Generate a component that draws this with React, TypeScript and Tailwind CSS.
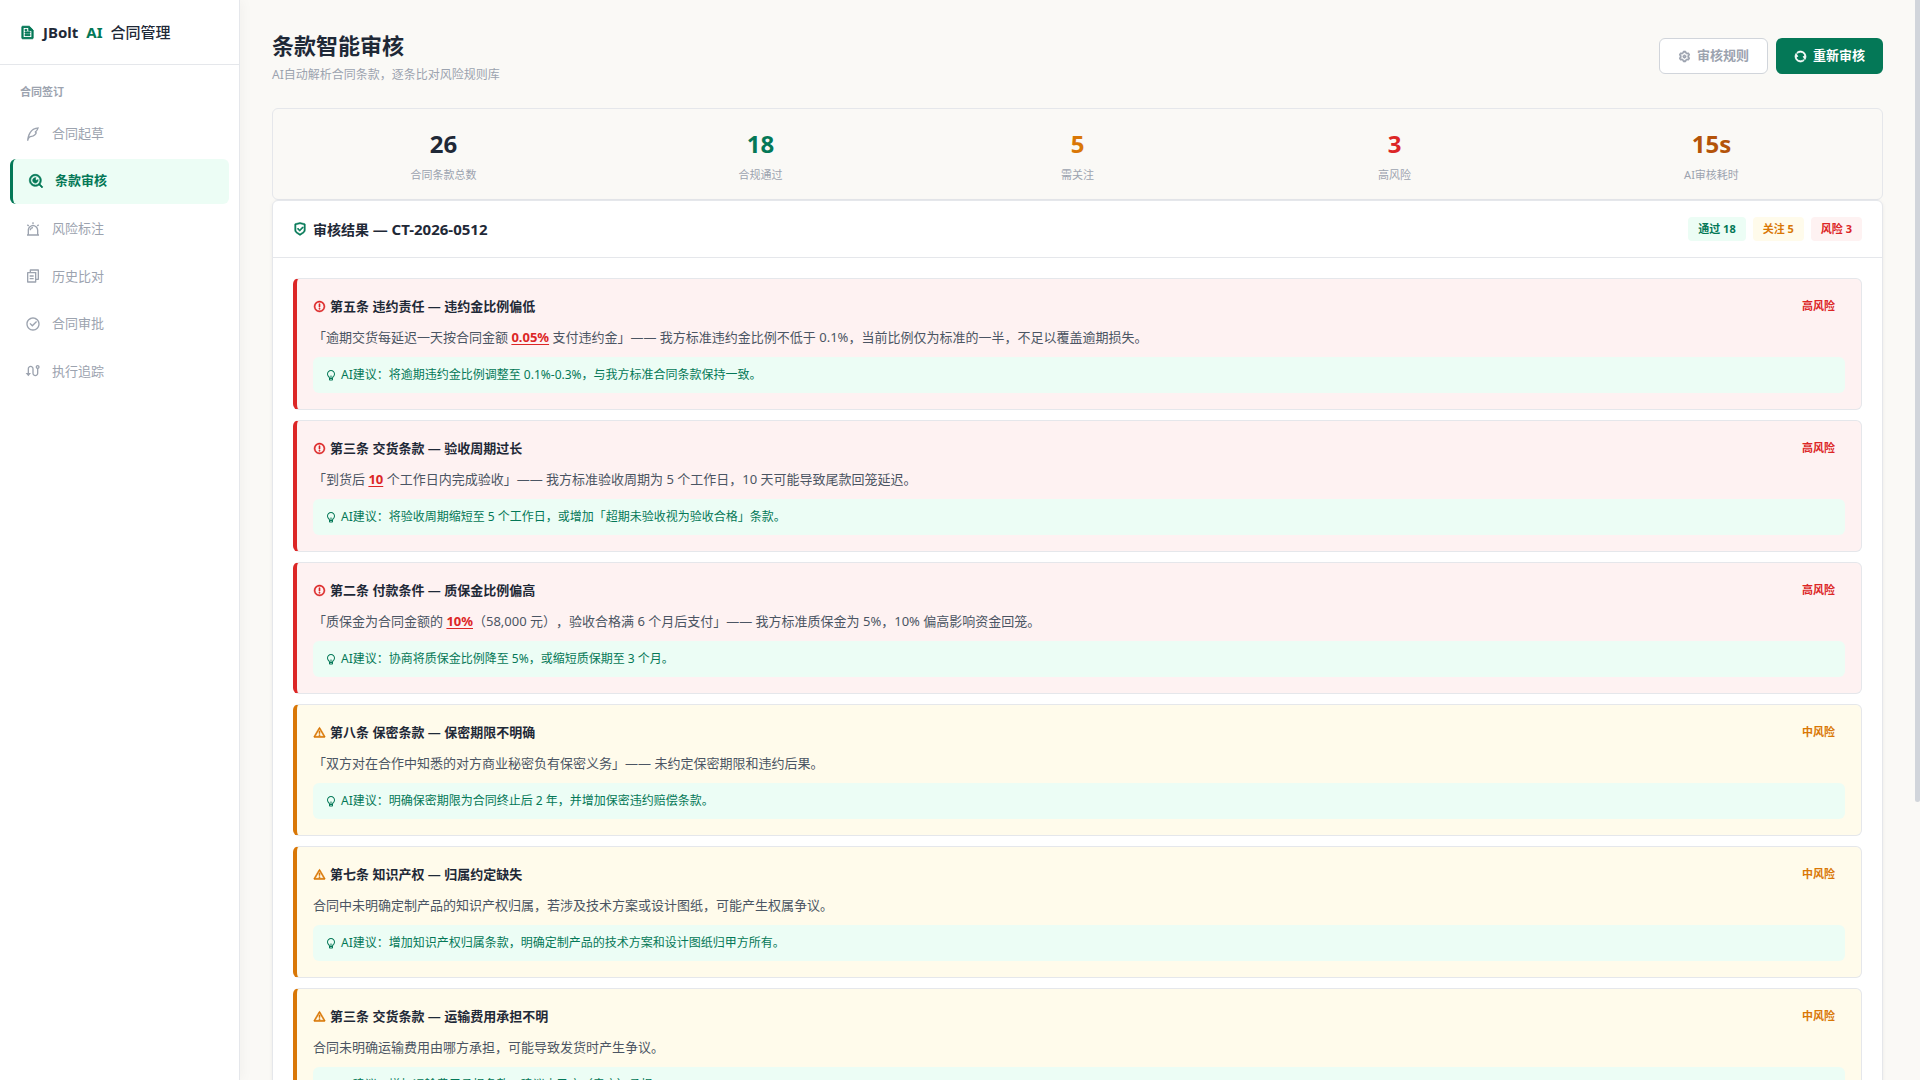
import React from 'react';
import {
  RiFileTextLine, RiQuillPenLine, RiSearchEyeLine, RiAlarmWarningLine, RiFileCopy2Line,
  RiCheckboxCircleLine, RiRouteLine, RiSettings3Line, RiRefreshLine, RiShieldCheckLine,
  RiErrorWarningLine, RiAlertLine, RiLightbulbLine,
} from 'react-icons/ri';

const NAV = [
  { label: '合同起草', Icon: RiQuillPenLine },
  { label: '条款审核', Icon: RiSearchEyeLine, active: true },
  { label: '风险标注', Icon: RiAlarmWarningLine },
  { label: '历史比对', Icon: RiFileCopy2Line },
  { label: '合同审批', Icon: RiCheckboxCircleLine },
  { label: '执行追踪', Icon: RiRouteLine },
];

const STATS = [
  { value: '26', label: '合同条款总数', color: 'text-[#1f2937]' },
  { value: '18', label: '合规通过', color: 'text-[#047857]' },
  { value: '5', label: '需关注', color: 'text-[#d97706]' },
  { value: '3', label: '高风险', color: 'text-[#dc2626]' },
  { value: '15s', label: 'AI审核耗时', color: 'text-[#b45309]' },
];

const Mark = ({ children }: { children: React.ReactNode }) => (
  <strong className="font-bold text-[#dc2626] underline underline-offset-2">{children}</strong>
);

type Clause = { title: string; high: boolean; body: React.ReactNode; advice: string };

const CLAUSES: Clause[] = [
  {
    title: '第五条 违约责任 — 违约金比例偏低', high: true,
    body: <>「逾期交货每延迟一天按合同金额 <Mark>0.05%</Mark> 支付违约金」—— 我方标准违约金比例不低于 0.1%，当前比例仅为标准的一半，不足以覆盖逾期损失。</>,
    advice: '将逾期违约金比例调整至 0.1%-0.3%，与我方标准合同条款保持一致。',
  },
  {
    title: '第三条 交货条款 — 验收周期过长', high: true,
    body: <>「到货后 <Mark>10</Mark> 个工作日内完成验收」—— 我方标准验收周期为 5 个工作日，10 天可能导致尾款回笼延迟。</>,
    advice: '将验收周期缩短至 5 个工作日，或增加「超期未验收视为验收合格」条款。',
  },
  {
    title: '第二条 付款条件 — 质保金比例偏高', high: true,
    body: <>「质保金为合同金额的 <Mark>10%</Mark>（58,000 元），验收合格满 6 个月后支付」—— 我方标准质保金为 5%，10% 偏高影响资金回笼。</>,
    advice: '协商将质保金比例降至 5%，或缩短质保期至 3 个月。',
  },
  {
    title: '第八条 保密条款 — 保密期限不明确', high: false,
    body: '「双方对在合作中知悉的对方商业秘密负有保密义务」—— 未约定保密期限和违约后果。',
    advice: '明确保密期限为合同终止后 2 年，并增加保密违约赔偿条款。',
  },
  {
    title: '第七条 知识产权 — 归属约定缺失', high: false,
    body: '合同中未明确定制产品的知识产权归属，若涉及技术方案或设计图纸，可能产生权属争议。',
    advice: '增加知识产权归属条款，明确定制产品的技术方案和设计图纸归甲方所有。',
  },
  {
    title: '第三条 交货条款 — 运输费用承担不明', high: false,
    body: '合同未明确运输费用由哪方承担，可能导致发货时产生争议。',
    advice: '增加运输费用承担条款，建议由乙方（卖方）承担。',
  },
];

function Sidebar() {
  return (
    <aside className="w-60 shrink-0 border-r border-[#e5e7eb] bg-white shadow-[2px_0_12px_rgba(0,0,0,0.04)]">
      <div className="flex h-[65px] items-center gap-2 border-b border-[#e5e7eb] px-5 text-[15px] font-bold">
        <RiFileTextLine className="size-[15px] stroke-current stroke-[1.5] text-[#047857]" />
        <span>JBolt</span>
        <span className="text-[#047857]">AI</span>
        <span className="font-medium">合同管理</span>
      </div>
      <h2 className="px-5 pt-4 text-[11px] leading-[22px] font-bold text-[#9ca3af]">合同签订</h2>
      <nav className="mt-2 flex h-[283px] flex-col justify-between px-[10px]">
        {NAV.map(({ label, Icon, active }) => (
          <a
            key={label}
            href="#"
            className={
              active
                ? 'flex h-[45px] items-center gap-[11px] rounded-md border-l-3 border-[#047857] bg-[#ecfdf5] px-[15px] text-[13px] font-bold text-[#047857]'
                : 'flex h-[45px] items-center gap-[11px] rounded-md px-[15px] text-[13px] text-[#9ca3af]'
            }
          >
            <Icon className={active ? 'size-4 stroke-current stroke-1' : 'size-4'} />
            {label}
          </a>
        ))}
      </nav>
    </aside>
  );
}

function ClauseCard({ title, high, body, advice }: Clause) {
  const Icon = high ? RiErrorWarningLine : RiAlertLine;
  return (
    <article
      className={
        high
          ? 'rounded-md border border-l-4 border-[#e5e7eb] border-l-[#dc2626] bg-[#fef2f2] p-4'
          : 'rounded-md border border-l-4 border-[#e5e7eb] border-l-[#d97706] bg-[#fffbeb] p-4'
      }
    >
      <div className="flex items-center justify-between">
        <h3 className="flex items-center gap-1 text-[13px] leading-[22px] font-bold">
          <Icon
            className={
              high
                ? 'size-[13px] stroke-current stroke-1 text-[#dc2626]'
                : 'size-[13px] stroke-current stroke-1 text-[#d97706]'
            }
          />
          {title}
        </h3>
        <span className={high ? 'px-[10px] text-[11px] font-bold text-[#dc2626]' : 'px-[10px] text-[11px] font-bold text-[#d97706]'}>
          {high ? '高风险' : '中风险'}
        </span>
      </div>
      <p className="mt-[9px] text-[13px] leading-[22px] text-[#4b5563]">{body}</p>
      <p className="mt-[9px] flex h-9 items-center gap-1 rounded-md bg-[#ecfdf5] px-3 text-[12px] text-[#047857]">
        <RiLightbulbLine className="size-3" />
        AI建议：{advice}
      </p>
    </article>
  );
}

export default function App() {
  return (
    <div className="flex h-screen overflow-hidden bg-[#faf9f6] font-['Noto_Sans','Noto_Sans_CJK_SC',sans-serif] text-[#1f2937] [text-spacing-trim:space-all]">
      <Sidebar />
      <main className="min-w-0 flex-1 overflow-hidden px-8 pt-8">
        <header className="flex items-start justify-between">
          <div>
            <h1 className="text-[22px] leading-[26px] font-bold">条款智能审核</h1>
            <p className="mt-2 text-[12px] leading-[18px] text-[#9ca3af]">AI自动解析合同条款，逐条比对风险规则库</p>
          </div>
          <div className="mt-[6px] flex gap-2 text-[13px] font-bold">
            <button className="flex h-9 items-center gap-[6px] rounded-md border border-[#d1d5db] bg-white px-[18px] text-[#9ca3af]">
              <RiSettings3Line className="size-[13px] stroke-current stroke-[1.5]" />
              审核规则
            </button>
            <button className="flex h-9 items-center gap-[6px] rounded-md bg-[#047857] px-[18px] text-white">
              <RiRefreshLine className="size-[13px] stroke-current stroke-[1.5]" />
              重新审核
            </button>
          </div>
        </header>

        <section className="mt-6 grid grid-cols-5 gap-4 rounded-md border border-[#e5e7eb] px-5 py-4 text-center">
          {STATS.map((s) => (
            <div key={s.label}>
              <div className={`text-[24px] leading-[38px] font-bold ${s.color}`}>{s.value}</div>
              <div className="mt-1 text-[11px] leading-4 text-[#9ca3af]">{s.label}</div>
            </div>
          ))}
        </section>

        <section className="rounded-md border border-[#e5e7eb] bg-white shadow-[0_1px_4px_rgba(0,0,0,0.06)]">
          <div className="flex h-[57px] items-center justify-between border-b border-[#e5e7eb] px-5">
            <h2 className="flex items-center gap-[6px] text-[14px] font-bold">
              <RiShieldCheckLine className="size-[14px] stroke-current stroke-1 text-[#047857]" />
              <span>
                审核结果 <span className="text-[15px]">— CT-2026-0512</span>
              </span>
            </h2>
            <div className="flex gap-[7px] text-[11px] leading-6 font-bold">
              <span className="rounded-sm bg-[#ecfdf5] px-[10px] text-[#047857]">通过 18</span>
              <span className="rounded-sm bg-[#fffbeb] px-[10px] text-[#d97706]">关注 5</span>
              <span className="rounded-sm bg-[#fef2f2] px-[10px] text-[#dc2626]">风险 3</span>
            </div>
          </div>
          <div className="flex flex-col gap-[10px] p-5">
            {CLAUSES.map((c) => <ClauseCard key={c.title} {...c} />)}
          </div>
        </section>
      </main>
      <div className="w-[5px] shrink-0">
        <div className="h-[802px] rounded-b-sm bg-[#d1d5db]" />
      </div>
    </div>
  );
}
